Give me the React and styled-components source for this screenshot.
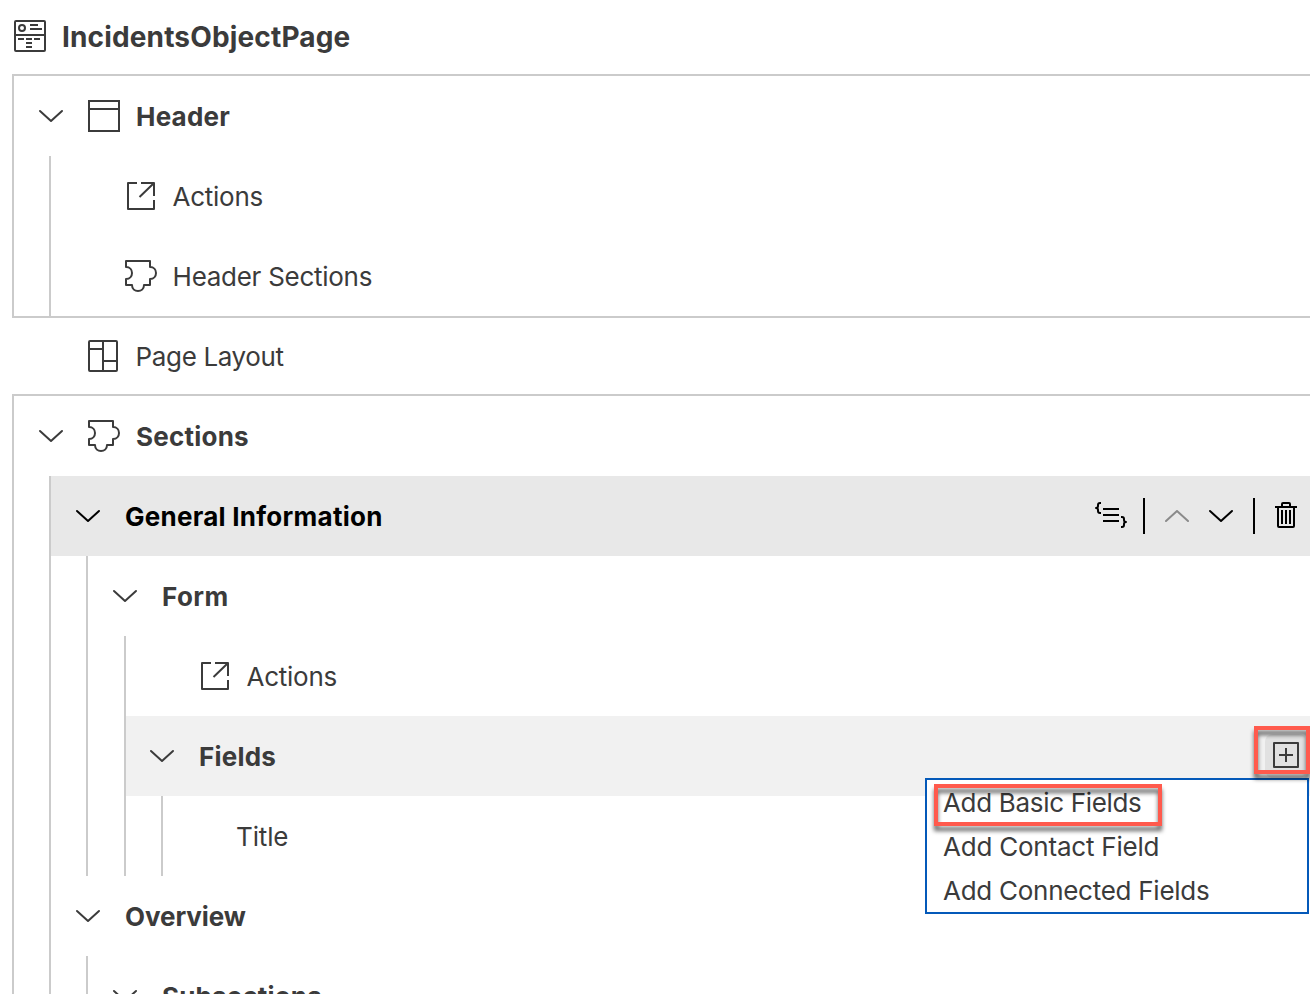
import React from "react";
import styled, { createGlobalStyle, css } from "styled-components";

const GlobalStyle = createGlobalStyle`
  * { box-sizing: border-box; }
  body {
    margin: 0;
    background: #fff;
    color: #3b3b3b;
    font-family: Inter, "Liberation Sans", sans-serif;
    overflow: hidden;
  }
`;

const Page = styled.main`
  position: relative;
  width: 1310px;
  height: 994px;
  overflow: hidden;
  padding-left: 12px;
`;

const PageTitle = styled.h1`
  display: flex;
  align-items: center;
  gap: 16px;
  height: 74px;
  margin: 0;
  padding-left: 2px;
  font-size: 28px;
  font-weight: 700;
  line-height: 34px;
  letter-spacing: 0.15px;
  svg { margin-top: -2px; }
`;

const Group = styled.section`
  border: 2px solid #cbcbcb;
  border-right: 0;
`;

const Branch = styled.div`
  margin-left: ${(p) => p.$indent || 35}px;
  border-left: 2px solid #cbcbcb;
`;

const Row = styled.div`
  display: flex;
  align-items: center;
  height: 80px;
  padding-left: ${(p) => (p.$leaf ? 74 : 25) - (p.$tight ? 1 : 0)}px;
  background: ${(p) => p.$background || "transparent"};
  color: ${(p) => (p.$active ? "#000" : "inherit")};
  ${(p) =>
    p.$standalone &&
    css`
      height: 76px;
      margin-left: 2px;
    `}
`;

const Toggle = styled.button`
  display: flex;
  flex: none;
  width: 24px;
  margin: 0 25px 0 0;
  padding: 0;
  border: 0;
  background: none;
  color: inherit;
`;

const Glyph = styled.svg`
  display: block;
  flex: none;
  fill: none;
  stroke: currentColor;
  stroke-width: 2;
  stroke-linejoin: round;
  overflow: visible;
`;

const IconSlot = styled.span`
  display: flex;
  width: 32px;
  margin-right: ${(p) => (p.$leaf ? 15.6 : 16)}px;
`;

const Label = styled.span`
  font-size: 26px;
  line-height: 32px;
  margin-top: 2px;
  white-space: nowrap;
  font-weight: ${(p) => (p.$bold ? 700 : 400)};
  letter-spacing: ${(p) => p.$spacing ?? (p.$bold ? 0.22 : -0.28)}px;
`;

const Toolbar = styled.div`
  display: flex;
  align-items: center;
  margin-left: auto;
  padding-right: 13px;
  > svg { margin-top: -2px; }
`;

const Separator = styled.span`
  width: 2px;
  height: 36px;
  background: #000;
  margin: 0 20px 0 ${(p) => p.$before || "20px"};
`;

const MoveButton = styled(Toggle)`
  margin: 0 ${(p) => (p.$up ? "20px" : "0")} 0 0;
  opacity: ${(p) => (p.$up ? 0.4 : 1)};
`;

const AddButton = styled.button`
  display: flex;
  align-items: center;
  justify-content: center;
  width: 42px;
  height: 44px;
  margin: 0 3px 0 auto;
  padding: 0 0 2px;
  border: 0;
  border-radius: 8px;
  background: #e1e1e1;
  color: #3b3b3b;
`;

const Menu = styled.ul`
  position: absolute;
  left: 925px;
  top: 778px;
  width: 384px;
  height: 136px;
  margin: 0;
  padding: 0;
  list-style: none;
  border: 2px solid #0459b9;
  background: #fff;
`;

const MenuItem = styled.li`
  display: flex;
  align-items: center;
  height: 44px;
  padding-left: 16px;
`;

const Highlight = styled.div`
  position: absolute;
  left: ${(p) => p.$left}px;
  top: ${(p) => p.$top}px;
  width: ${(p) => p.$width}px;
  height: ${(p) => p.$height}px;
  border: 4px solid #ff5a4d;
  filter: drop-shadow(0 5px 2px rgba(0, 0, 0, 0.6));
`;

const Chevron = ({ up }) => (
  <Glyph width="24" height="12" viewBox="0 0 24 12">
    <path strokeLinecap="round" d={up ? "M1 11 12 1 23 11" : "M1 1 12 11 23 1"} />
  </Glyph>
);

const PageIcon = () => (
  <Glyph width="32" height="32" viewBox="0 0 32 32">
    <rect x="1" y="1" width="30" height="30" rx="1" />
    <path d="M1 15H31M16 5H24M16 9H28M4 19H10M12 19H18M20 19H26M12 23H18M12 27H18" />
    <circle cx="8" cy="8" r="3" />
  </Glyph>
);

const HeaderIcon = () => (
  <Glyph width="32" height="32" viewBox="0 0 32 32">
    <path strokeLinejoin="miter" d="M1 1H31V31H1ZM1 9H31" />
  </Glyph>
);

const ActionIcon = () => (
  <Glyph width="32" height="32" viewBox="0 0 32 32">
    <path d="M12 3H3V29H29V20M16 3H29V16M28.500 3.500 14.500 17" />
  </Glyph>
);

const PuzzleIcon = () => (
  <Glyph width="32" height="32" viewBox="0 0 32 32">
    <path d="M1 1H25V7C29 7 31 10 31 13S29 19 25 19V25H19C19 29 16 31 13 31S7 29 7 25H1V19C5 19 7 16 7 13S5 7 1 7Z" />
  </Glyph>
);

const LayoutIcon = () => (
  <Glyph width="32" height="32" viewBox="0 0 32 32">
    <rect x="1" y="1" width="28" height="30" rx="1" />
    <path d="M15 1V31M1 9H15M15 21H29" />
  </Glyph>
);

const SnippetIcon = () => (
  <Glyph width="32" height="26" viewBox="0 0 32 26">
    <path d="M6 1H5Q3 1 3 3V4Q3 6 1 6Q3 6 3 8V9Q3 11 5 11H6M26 15H27Q29 15 29 17V18Q29 20 31 20Q29 20 29 22V23Q29 25 27 25H26M8 7H24M8 13H24M8 19H24" />
  </Glyph>
);

const TrashIcon = () => (
  <Glyph width="22" height="26" viewBox="0 0 22 26">
    <path d="M0 5H22M7 5V2Q7 1 8 1H14Q15 1 15 2V5M3 5V24Q3 25 4 25H18Q19 25 19 24V5M7 8V22M11 8V22M15 8V22" />
  </Glyph>
);

const AddIcon = () => (
  <Glyph width="26" height="26" viewBox="0 0 26 26">
    <path d="M1 1H25V25H1ZM6 13H20M13 6V20" />
  </Glyph>
);

function TreeRow({ label, icon: Icon, leaf, spacing, children, ...rest }) {
  return (
    <Row $leaf={leaf} {...rest}>
      {!leaf && (
        <Toggle aria-label="Collapse">
          <Chevron />
        </Toggle>
      )}
      {Icon && (
        <IconSlot $leaf={leaf}>
          <Icon />
        </IconSlot>
      )}
      <Label $bold={!leaf} $spacing={spacing}>
        {label}
      </Label>
      {children}
    </Row>
  );
}

export default function App() {
  return (
    <>
      <GlobalStyle />
      <Page>
        <PageTitle>
          <PageIcon />
          IncidentsObjectPage
        </PageTitle>

        <Group>
          <TreeRow label="Header" icon={HeaderIcon} />
          <Branch>
            <TreeRow leaf label="Actions" icon={ActionIcon} />
            <TreeRow leaf label="Header Sections" icon={PuzzleIcon} />
          </Branch>
        </Group>

        <TreeRow leaf label="Page Layout" icon={LayoutIcon} spacing={-0.36} $standalone />

        <Group>
          <TreeRow label="Sections" icon={PuzzleIcon} />
          <Branch>
            <TreeRow
              label="General Information"
              spacing={0.26}
              $background="#e8e8e8"
              $active
            >
              <Toolbar>
                <SnippetIcon />
                <Separator $before="16px" />
                <MoveButton $up aria-label="Move up">
                  <Chevron up />
                </MoveButton>
                <MoveButton aria-label="Move down">
                  <Chevron />
                </MoveButton>
                <Separator />
                <TrashIcon />
              </Toolbar>
            </TreeRow>
            <Branch>
              <TreeRow label="Form" spacing={0.4} />
              <Branch $indent={36}>
                <TreeRow leaf label="Actions" icon={ActionIcon} $tight />
                <TreeRow label="Fields" $background="#f1f1f1" $tight>
                  <AddButton aria-label="Add">
                    <AddIcon />
                  </AddButton>
                </TreeRow>
                <Branch>
                  <TreeRow leaf label="Title" spacing={-0.15} $tight />
                </Branch>
              </Branch>
            </Branch>
            <TreeRow label="Overview" spacing={-0.08} />
            <Branch>
              <TreeRow label="Subsections" spacing={0.15} />
            </Branch>
          </Branch>
        </Group>

        <Menu>
          <MenuItem>
            <Label $spacing={-0.32}>Add Basic Fields</Label>
          </MenuItem>
          <MenuItem>
            <Label $spacing={-0.22}>Add Contact Field</Label>
          </MenuItem>
          <MenuItem>
            <Label $spacing={-0.27}>Add Connected Fields</Label>
          </MenuItem>
        </Menu>
        <Highlight $left={1254} $top={726} $width={56} $height={48} />
        <Highlight $left={934} $top={784} $width={228} $height={42} />
      </Page>
    </>
  );
}
